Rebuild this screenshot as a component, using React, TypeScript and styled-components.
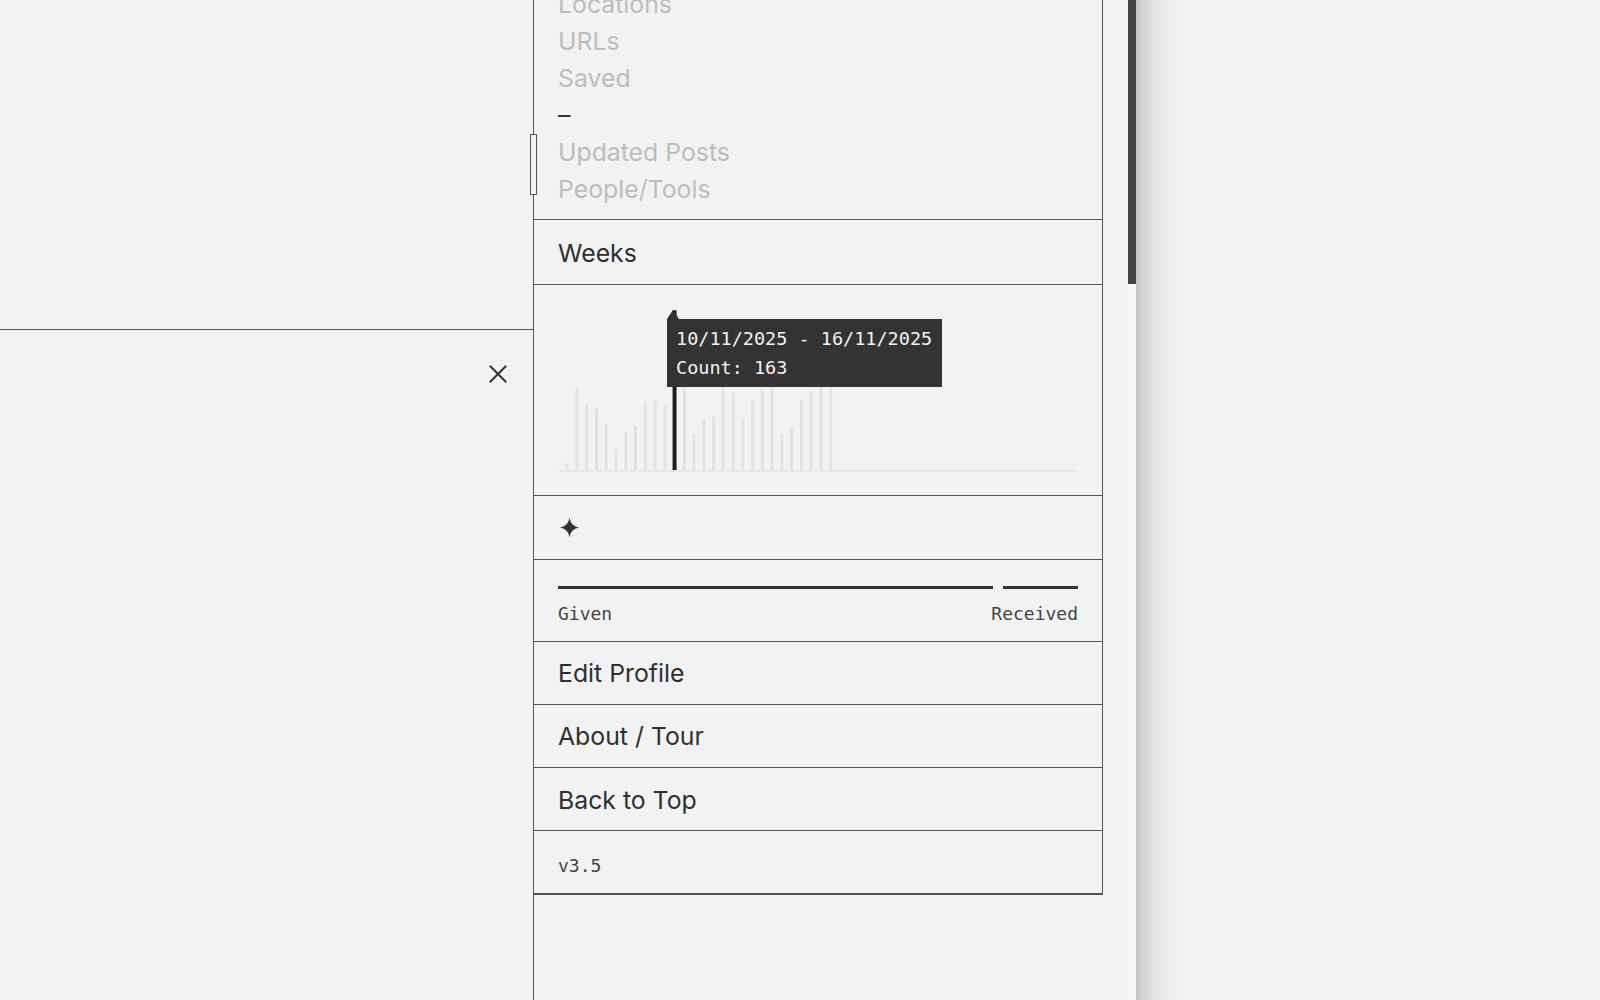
import React from "react";
import styled, { createGlobalStyle } from "styled-components";

const GlobalStyle = createGlobalStyle`
  html, body {
    margin: 0;
    padding: 0;
    background: #f2f2f2;
    overflow: hidden;
  }
  * {
    box-sizing: border-box;
  }
`;

const LINE = "#555";
const SANS = `"Inter", "Noto Sans", sans-serif`;
const MONO = `"DejaVu Sans Mono", "Liberation Mono", monospace`;

const Page = styled.div`
  display: flex;
  height: 100vh;
  font-family: ${SANS};
  color: #333;
`;

const LeftPane = styled.div`
  width: 533px;
  flex-shrink: 0;
  display: flex;
  flex-direction: column;
`;

const LeftTop = styled.div`
  height: 330px;
  border-bottom: 1px solid ${LINE};
`;

const CloseBar = styled.div`
  display: flex;
  justify-content: flex-end;
  padding: 35px 26px 0 0;
`;

const CloseButton = styled.button`
  display: flex;
  padding: 0;
  border: none;
  background: none;
  color: #333;
  cursor: pointer;
`;

const Column = styled.div`
  position: relative;
  width: 603px;
  flex-shrink: 0;
  display: flex;
  border-left: 1px solid ${LINE};
`;

const ResizeHandle = styled.div`
  position: absolute;
  left: -4px;
  top: 134px;
  width: 7px;
  height: 61px;
  border: 1px solid ${LINE};
  background: #f2f2f2;
`;

const ColumnBody = styled.div`
  flex: 1;
  overflow: hidden;
  padding-right: 25px;
`;

const Menu = styled.div`
  border-right: 1px solid ${LINE};
  border-bottom: 1px solid ${LINE};
`;

/* the list is scrolled partway, so its first row sits under the top edge */
const NavList = styled.ul`
  list-style: none;
  margin: -14px 0 0;
  padding: 0 24px 11px;
  border-bottom: 1px solid ${LINE};
`;

const NavItem = styled.li<{ $active?: boolean }>`
  font-size: 24.8px;
  line-height: 37px;
  color: ${(p) => (p.$active ? "#333" : "#bdbdbd")};
`;

const Row = styled.div<{ $h?: number; $pt?: number }>`
  height: ${(p) => p.$h ?? 63.33}px;
  display: flex;
  align-items: center;
  padding: ${(p) => p.$pt ?? 0}px 24px 0;
  border-bottom: 1px solid ${LINE};
  font-size: 24.8px;
  color: #2f2f2f;
`;

const MonoText = styled.span`
  font-family: ${MONO};
  font-size: 18px;
  color: #444;
`;

const ChartSection = styled.div`
  height: 211px;
  padding: 0 24px;
  border-bottom: 1px solid ${LINE};
`;

const ChartBox = styled.div`
  position: relative;
  height: 210px;
`;

const Tooltip = styled.div`
  position: absolute;
  left: 109px;
  top: 34px;
  padding: 5px 10px 5px 9px;
  background: #333;
  color: #f2f2f2;
  font-family: ${MONO};
  font-size: 18.5px;
  line-height: 29px;
  white-space: nowrap;

  &::before {
    content: "";
    position: absolute;
    left: 0;
    top: -9px;
    border-left: 6px solid transparent;
    border-right: 6px solid transparent;
    border-bottom: 9px solid #333;
  }
`;

const BalanceRow = styled.div`
  height: 82px;
  padding: 26px 24px 0;
  border-bottom: 1px solid ${LINE};
`;

const BalanceBars = styled.div`
  display: flex;
  gap: 10px;
`;

const BalanceBar = styled.div<{ $grow: number }>`
  flex: ${(p) => p.$grow} 1 0;
  height: 3px;
  background: #333;
`;

const BalanceLabels = styled.div`
  display: flex;
  justify-content: space-between;
  margin-top: 14px;
  line-height: 22px;
`;

const ScrollTrack = styled.div`
  width: 8px;
  flex-shrink: 0;
  background: #f6f6f6;
`;

const ScrollThumb = styled.div`
  height: 284px;
  background: #444;
`;

const RightPane = styled.div`
  flex: 1;
  background: linear-gradient(
    to right,
    #c4c4c4 0px,
    #d6d6d6 8px,
    #e4e4e4 20px,
    #eeeeee 34px,
    #f2f2f2 50px
  );
`;

const weekly = [
  7, 84, 67, 63, 47, 21, 39, 45, 70, 71, 65, 163, 97, 37, 52, 55, 102, 79, 52,
  71, 82, 90, 37, 44, 72, 80, 85, 92,
];
const ACTIVE_WEEK = 11;
const SLOT = 9.76;
const BASE = 185;

const WeeksChart = () => (
  <svg width="100%" height="210" viewBox="0 0 519 210">
    <rect x="0" y={BASE} width="519" height="1.5" fill="#e2e2e2" />
    {weekly.map((count, i) => {
      const h = count * 0.98;
      const active = i === ACTIVE_WEEK;
      const w = active ? 4 : 3;
      const cx = 8.7 + i * SLOT;
      return (
        <rect
          key={i}
          x={cx - w / 2}
          y={BASE - h}
          width={w}
          height={h}
          fill={active ? "#1c1c1c" : "#e3e3e3"}
        />
      );
    })}
  </svg>
);

const Sparkle = () => (
  <svg width="23" height="23" viewBox="0 0 24 24" fill="#333">
    <path d="M12 1.5C12.7 7.4 16.6 11.3 22.5 12C16.6 12.7 12.7 16.6 12 22.5C11.3 16.6 7.4 12.7 1.5 12C7.4 11.3 11.3 7.4 12 1.5Z" />
  </svg>
);

const CloseIcon = () => (
  <svg width="18" height="18" viewBox="0 0 18 18" stroke="#333" strokeWidth="2" strokeLinecap="square">
    <path d="M1.5 1.5L16.5 16.5M16.5 1.5L1.5 16.5" />
  </svg>
);

const navItems = ["Locations", "URLs", "Saved", "–", "Updated Posts", "People/Tools"];

export default function App() {
  return (
    <>
      <GlobalStyle />
      <Page>
        <LeftPane>
          <LeftTop />
          <CloseBar>
            <CloseButton aria-label="Close">
              <CloseIcon />
            </CloseButton>
          </CloseBar>
        </LeftPane>

        <Column>
          <ResizeHandle />
          <ColumnBody>
            <Menu>
              <NavList>
                {navItems.map((item) => (
                  <NavItem key={item} $active={item === "–"}>
                    {item}
                  </NavItem>
                ))}
              </NavList>
              <Row $h={65} $pt={1}>Weeks</Row>
              <ChartSection>
                <ChartBox>
                  <WeeksChart />
                  <Tooltip>
                    <div>10/11/2025 - 16/11/2025</div>
                    <div>Count: 163</div>
                  </Tooltip>
                </ChartBox>
              </ChartSection>
              <Row $h={63.5}>
                <Sparkle />
              </Row>
              <BalanceRow>
                <BalanceBars>
                  <BalanceBar $grow={434} />
                  <BalanceBar $grow={75} />
                </BalanceBars>
                <BalanceLabels>
                  <MonoText>Given</MonoText>
                  <MonoText>Received</MonoText>
                </BalanceLabels>
              </BalanceRow>
              <Row $pt={1}>Edit Profile</Row>
              <Row $pt={1}>About / Tour</Row>
              <Row $pt={1}>Back to Top</Row>
              <Row $h={63} $pt={6}>
                <MonoText>v3.5</MonoText>
              </Row>
            </Menu>
          </ColumnBody>
          <ScrollTrack>
            <ScrollThumb />
          </ScrollTrack>
        </Column>

        <RightPane />
      </Page>
    </>
  );
}
